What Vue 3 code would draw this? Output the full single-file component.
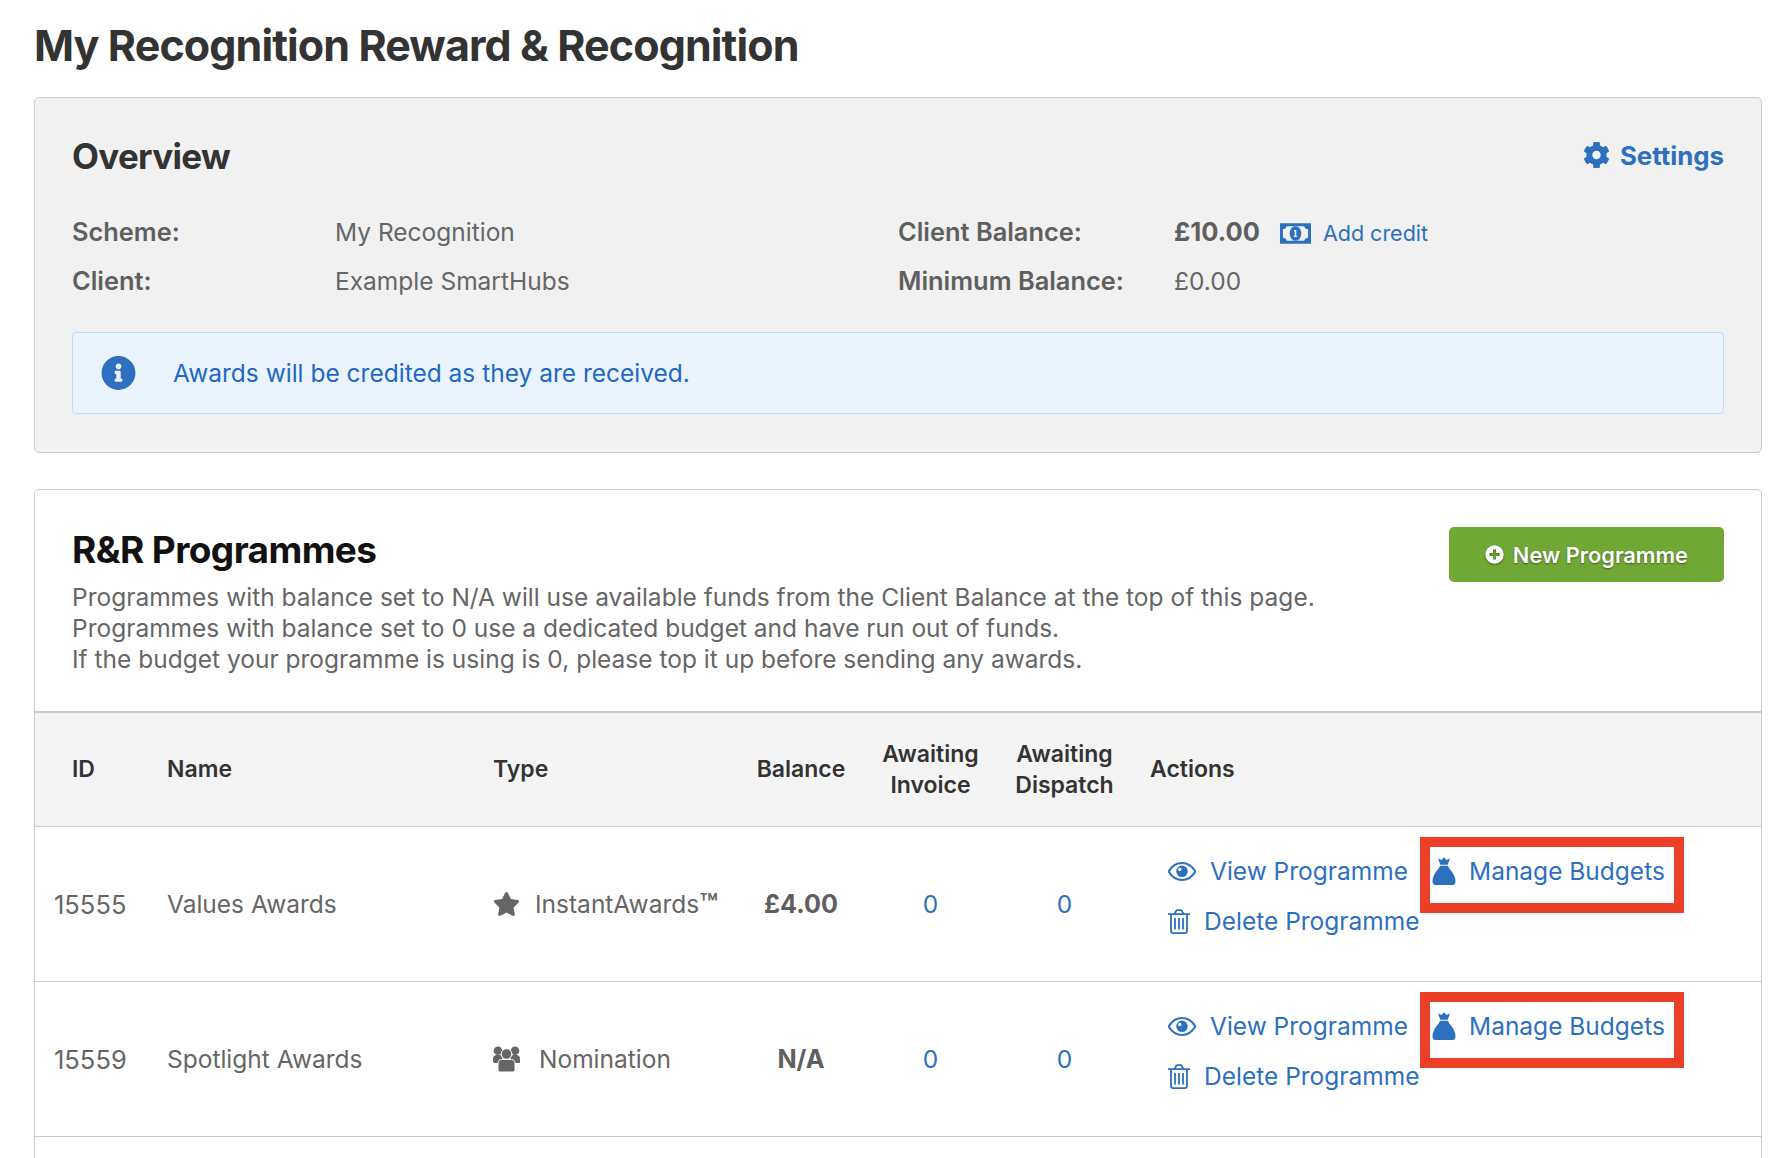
<script setup>
const overviewLeft = [
  { label: 'Scheme:', value: 'My Recognition' },
  { label: 'Client:', value: 'Example SmartHubs' }
];

const programmes = [
  { id: 15555, name: 'Values Awards', type: 'InstantAwards', tm: true, icon: 'star', balance: '£4.00', invoice: 0, dispatch: 0 },
  { id: 15559, name: 'Spotlight Awards', type: 'Nomination', tm: false, icon: 'users', balance: 'N/A', invoice: 0, dispatch: 0 }
];
</script>

<template>
  <div class="page">
    <h1 class="page-title">My Recognition Reward &amp; Recognition</h1>

    <section class="panel overview">
      <div class="panel-head">
        <h2 class="overview-title">Overview</h2>
        <a class="settings">
          <svg class="settings-icon" viewBox="0 0 512 512"><path fill="currentColor" d="M487.4 315.7l-42.6-24.6c4.3-23.2 4.3-47 0-70.2l42.6-24.6c4.9-2.8 7.1-8.6 5.5-14-11.1-35.6-30-67.8-54.7-94.6-3.8-4.1-10-5.1-14.8-2.3L380.8 110c-17.9-15.4-38.5-27.3-60.8-35.1V25.8c0-5.6-3.9-10.5-9.4-11.7-36.7-8.2-74.3-7.8-109.2 0-5.5 1.2-9.4 6.1-9.4 11.7V75c-22.2 7.9-42.8 19.8-60.8 35.1L88.7 85.5c-4.9-2.8-11-1.9-14.8 2.3-24.7 26.7-43.6 58.9-54.7 94.6-1.7 5.4.6 11.2 5.5 14L67.3 221c-4.3 23.2-4.3 47 0 70.2l-42.6 24.6c-4.9 2.8-7.1 8.6-5.5 14 11.1 35.6 30 67.8 54.7 94.6 3.8 4.1 10 5.1 14.8 2.3l42.6-24.6c17.9 15.4 38.5 27.3 60.8 35.1v49.2c0 5.6 3.9 10.5 9.4 11.7 36.7 8.2 74.3 7.8 109.2 0 5.5-1.2 9.4-6.1 9.4-11.7v-49.2c22.2-7.9 42.8-19.8 60.8-35.1l42.6 24.6c4.9 2.8 11 1.9 14.8-2.3 24.7-26.7 43.6-58.9 54.7-94.6 1.5-5.5-.7-11.3-5.6-14.1zM256 336c-44.1 0-80-35.9-80-80s35.9-80 80-80 80 35.9 80 80-35.9 80-80 80z"/></svg>
          Settings
        </a>
      </div>

      <div class="facts">
        <div class="facts-col">
          <div v-for="row in overviewLeft" :key="row.label" class="fact">
            <span class="fact-label">{{ row.label }}</span>
            <span>{{ row.value }}</span>
          </div>
        </div>
        <div class="facts-col facts-right">
          <div class="fact">
            <span class="fact-label">Client Balance:</span>
            <strong class="balance">£10.00</strong>
            <a class="add-credit">
              <svg class="bill-icon" viewBox="0 0 32 21">
                <path fill="currentColor" fill-rule="evenodd" d="M0 0h32v21H0zM3 6v9c2 0 3.500 1 4 3h18c.5-2 2-3 4-3V6c-2 0-3.500-1-4-3H7c-.5 2-2 3-4 3z"/>
                <ellipse cx="16" cy="10.500" rx="6" ry="7.500" fill="currentColor"/>
                <path fill="#f1f1f1" d="M14.600 6.800h2.200v5.900h1.100v1.500h-3.700v-1.500h1V8.400h-.8z"/>
              </svg>
              Add credit
            </a>
          </div>
          <div class="fact">
            <span class="fact-label">Minimum Balance:</span>
            <span>£0.00</span>
          </div>
        </div>
      </div>

      <div class="alert">
        <svg class="alert-icon" viewBox="0 0 512 512"><path fill="currentColor" d="M256 8C119.043 8 8 119.083 8 256c0 136.997 111.043 248 248 248s248-111.003 248-248C504 119.083 392.957 8 256 8zm0 110c23.196 0 42 18.804 42 42s-18.804 42-42 42-42-18.804-42-42 18.804-42 42-42zm56 254c0 6.627-5.373 12-12 12h-88c-6.627 0-12-5.373-12-12v-24c0-6.627 5.373-12 12-12h12v-64h-12c-6.627 0-12-5.373-12-12v-24c0-6.627 5.373-12 12-12h64c6.627 0 12 5.373 12 12v100h12c6.627 0 12 5.373 12 12v24z"/></svg>
        <span>Awards will be credited as they are received.</span>
      </div>
    </section>

    <section class="panel programmes">
      <div class="programmes-head">
        <div>
          <h2 class="programmes-title">R&amp;R Programmes</h2>
          <p class="programmes-note">
            Programmes with balance set to N/A will use available funds from the Client Balance at the top of this page.<br>
            Programmes with balance set to 0 use a dedicated budget and have run out of funds.<br>
            If the budget your programme is using is 0, please top it up before sending any awards.
          </p>
        </div>
        <button class="new-btn">
          <svg class="plus-icon" viewBox="0 0 512 512"><path fill="currentColor" fill-rule="evenodd" d="M256 8a248 248 0 1 0 0 496 248 248 0 0 0 0-496zM216 120h80v96h96v80h-96v96h-80v-96h-96v-80h96z"/></svg>
          New Programme
        </button>
      </div>

      <table class="table">
        <colgroup>
          <col style="width: 114px">
          <col style="width: 326px">
          <col style="width: 263px">
          <col style="width: 126px">
          <col style="width: 133px">
          <col style="width: 135px">
          <col>
        </colgroup>
        <thead>
          <tr>
            <th class="col-id">ID</th>
            <th>Name</th>
            <th>Type</th>
            <th class="center">Balance</th>
            <th class="center">Awaiting<br>Invoice</th>
            <th class="center">Awaiting<br>Dispatch</th>
            <th>Actions</th>
          </tr>
        </thead>
        <tbody>
          <tr v-for="p in programmes" :key="p.id">
            <td class="cell-id">{{ p.id }}</td>
            <td>{{ p.name }}</td>
            <td>
              <span class="type">
                <svg v-if="p.icon === 'star'" class="star-icon" viewBox="0 0 576 512"><path fill="currentColor" d="M259.3 17.8L194 150.2 47.9 171.5c-26.2 3.8-36.7 36.1-17.7 54.6l105.7 103-25 145.5c-4.5 26.3 23.2 46 46.4 33.7L288 439.6l130.7 68.7c23.2 12.2 50.9-7.4 46.4-33.7l-25-145.5 105.7-103c19-18.5 8.5-50.8-17.7-54.6L382 150.2 316.7 17.8c-11.7-23.6-45.6-23.9-57.4 0z"/></svg>
                <svg v-else class="users-icon" viewBox="0 0 27 26">
                  <g fill="currentColor">
                    <circle cx="5" cy="4.800" r="4.300"/>
                    <circle cx="22" cy="4.800" r="4.300"/>
                    <path d="M0 13c0-2.500 1.500-4 3.500-4h3c1.500 0 3 1.500 3 4s-2 4-3.500 4H2c-1.200 0-2-.8-2-2zM27 13c0-2.500-1.500-4-3.500-4h-3c-1.500 0-3 1.500-3 4s2 4 3.500 4h5c1.200 0 2-.8 2-2z"/>
                    <circle cx="13.500" cy="8" r="5.300" stroke="#fff" stroke-width="1"/>
                    <path stroke="#fff" stroke-width="1" d="M8.500 13.500h10c2 0 3.500 1.500 3.500 3.500v6.500c0 1.500-1 2.500-2.500 2.500h-12C6 26 5 25 5 23.500V17c0-2 1.500-3.500 3.500-3.500z"/>
                  </g>
                </svg>
                {{ p.type }}<span v-if="p.tm" class="tm">™</span>
              </span>
            </td>
            <td class="center"><strong class="row-balance">{{ p.balance }}</strong></td>
            <td class="center count">{{ p.invoice }}</td>
            <td class="center count">{{ p.dispatch }}</td>
            <td class="cell-actions">
              <div class="actions">
                <a class="action">
                  <svg class="eye-icon" viewBox="0 0 28 19">
                    <path fill="none" stroke="currentColor" stroke-width="2" d="M.6 9.500C4 4 8.500 1.100 14 1.100S24 4 27.400 9.500C24 15 19.500 17.900 14 17.900S4 15 .6 9.500z"/>
                    <path fill="currentColor" fill-rule="evenodd" d="M14 3.500a5.800 5.800 0 1 0 0 11.600 5.800 5.800 0 0 0 0-11.600zM11.800 5.800a1.700 1.700 0 1 1 0 3.400 1.700 1.700 0 0 1 0-3.400z"/>
                  </svg>
                  View Programme
                </a>
                <a class="action action-manage">
                  <svg class="bag-icon" viewBox="0 0 24 28">
                    <path fill="currentColor" d="M6 1.500l3.500 1.600L12 .3l2.500 2.800L18 1.500l-2.300 6.300H8.300zM8 8.700h8c.8 3 4 5 6 9.500 1.500 3.500 2 6.500 1 8.300-.5 1-1.500 1.500-3 1.500H4c-1.500 0-2.500-.5-3-1.500-1-1.800-.5-4.800 1-8.300 2-4.500 5.200-6.500 6-9.500z"/>
                  </svg>
                  Manage Budgets
                </a>
                <a class="action">
                  <svg class="trash-icon" viewBox="0 0 22 25">
                    <g fill="none" stroke="currentColor" stroke-width="1.800">
                      <path d="M0 5.200h22M3 5.200v16.800c0 1.200 1 2.100 2.300 2.100h11.400c1.300 0 2.300-.9 2.300-2.100V5.200M6.500 5.200l1.600-3.200c.3-.6.800-.9 1.400-.9h3c.6 0 1.100.3 1.400.9l1.600 3.200"/>
                      <path d="M7 9v11.500M11 9v11.500M15 9v11.500"/>
                    </g>
                  </svg>
                  Delete Programme
                </a>
              </div>
            </td>
          </tr>
        </tbody>
      </table>
    </section>
  </div>
</template>

<style scoped>
.page {
  height: 1158px;
  overflow: hidden;
  box-sizing: border-box;
  padding: 19px 14px 0 34px;
  font-family: Inter, "Liberation Sans", sans-serif;
  font-size: 24.5px;
  color: #666;
}

.page-title {
  margin: 0 0 26px;
  font-size: 43px;
  line-height: 52px;
  font-weight: 700;
  letter-spacing: -0.9px;
  color: #333;
}

.panel {
  border: 1px solid #ccc;
  border-radius: 5px;
}

.overview {
  background: #f1f1f1;
  padding: 35px 37px 38px;
  margin-bottom: 36px;
}

.panel-head {
  display: flex;
  justify-content: space-between;
  align-items: center;
  height: 46px;
}

.overview-title {
  margin: 0;
  font-size: 35px;
  font-weight: 700;
  letter-spacing: -0.7px;
  color: #333;
}

.settings {
  display: flex;
  align-items: center;
  gap: 10px;
  padding-bottom: 2px;
  font-weight: 700;
  font-size: 25.8px;
  color: #2d70bf;
}

.settings-icon {
  width: 27px;
  height: 28px;
}

.facts {
  display: flex;
  margin-top: 28px;
}

.facts-col {
  width: 826px;
}

.fact {
  display: flex;
  align-items: center;
  height: 49px;
}

.fact-label {
  width: 263px;
  font-size: 25.4px;
  font-weight: 600;
  color: #5f5f5f;
}

.facts-right .fact-label {
  width: 276px;
}

.balance {
  font-weight: 700;
  font-size: 25.5px;
  color: #5f5f5f;
}

.add-credit {
  display: flex;
  align-items: center;
  gap: 12px;
  margin-left: 20px;
  padding-top: 3px;
  font-size: 21.5px;
  color: #2d70bf;
}

.bill-icon {
  width: 31px;
  height: 21px;
}

.alert {
  display: flex;
  align-items: center;
  gap: 37px;
  height: 82px;
  box-sizing: border-box;
  margin-top: 27px;
  padding-left: 28px;
  background: #ebf4fe;
  border: 1px solid #bcdcf7;
  border-radius: 4px;
  color: #1f69c4;
}

.alert-icon {
  width: 35px;
  height: 36px;
  color: #2d70bf;
}

.programmes {
  background: #fff;
  height: 900px;
}

.programmes-head {
  display: flex;
  justify-content: space-between;
  align-items: flex-start;
  padding: 37px 37px 0;
  height: 221px;
  box-sizing: border-box;
}

.programmes-title {
  margin: 0;
  font-size: 37px;
  line-height: 46px;
  font-weight: 700;
  letter-spacing: -0.6px;
  color: #111;
}

.programmes-note {
  margin: 9px 0 0;
  line-height: 31px;
}

.new-btn {
  display: flex;
  align-items: center;
  gap: 9px;
  height: 55px;
  padding: 0 36px;
  border: none;
  border-radius: 5px;
  background: #70a836;
  color: #fff;
  font-family: inherit;
  font-size: 21.8px;
  font-weight: 600;
  text-shadow: 0 1px 2px rgba(0, 0, 0, 0.45);
}

.plus-icon {
  width: 19px;
  height: 19px;
  filter: drop-shadow(0 1px 1px rgba(0, 0, 0, 0.4));
}

.table {
  width: 100%;
  table-layout: fixed;
  border-collapse: collapse;
}

th {
  height: 113px;
  padding: 0 0 0 18px;
  background: #f4f4f4;
  border-top: 2px solid #ccc;
  border-bottom: 1px solid #ccc;
  text-align: left;
  font-size: 23px;
  line-height: 31px;
  font-weight: 600;
  color: #333;
}

th.col-id {
  padding-left: 37px;
}

th.center,
td.center {
  padding: 0;
  text-align: center;
}

td {
  height: 155px;
  padding: 0 0 0 18px;
  border-bottom: 1px solid #ccc;
  box-sizing: border-box;
}

.cell-id {
  padding-left: 19px;
  font-size: 25.5px;
}

.type {
  display: flex;
  align-items: center;
}

.tm {
  font-size: 30px;
  font-weight: 600;
  line-height: 0;
}

.star-icon {
  width: 27px;
  height: 24px;
  margin-right: 15px;
}

.users-icon {
  width: 27px;
  height: 26px;
  margin-right: 19px;
}

.row-balance {
  font-size: 25.2px;
  font-weight: 700;
  color: #5f5f5f;
}

.count {
  color: #2d70bf;
}

.cell-actions {
  padding-bottom: 16px;
}

.actions {
  display: flex;
  flex-wrap: wrap;
  gap: 22px 24px;
  padding-left: 18px;
  color: #2d70bf;
}

.action {
  display: flex;
  align-items: center;
  height: 28px;
}

.action-manage {
  position: relative;
}

/* the red annotation frame drawn over the screenshot */
.action-manage::after {
  content: "";
  position: absolute;
  left: -12px;
  top: -20px;
  right: -19px;
  bottom: -28px;
  border: 10px solid #ec3f27;
}

.eye-icon {
  width: 28px;
  height: 19px;
  margin-right: 14px;
}

.bag-icon {
  width: 24px;
  height: 28px;
  margin-right: 13px;
}

.trash-icon {
  width: 22px;
  height: 25px;
  margin-right: 14px;
}
</style>

<style>
html,
body {
  margin: 0;
  background: #fff;
  overflow: hidden;
}
</style>
